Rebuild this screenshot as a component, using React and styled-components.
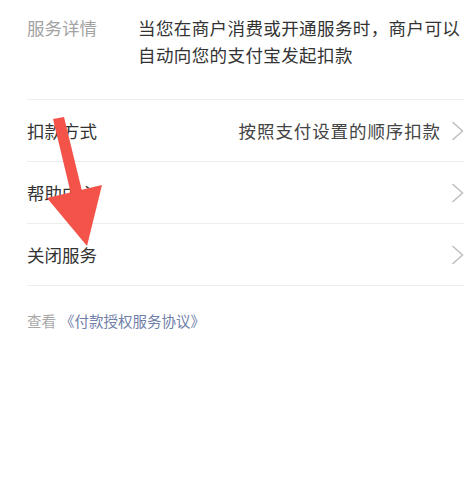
import React from "react";
import styled, { createGlobalStyle } from "styled-components";

const Global = createGlobalStyle`
  html, body { margin: 0; padding: 0; background: #fff; }
  body { font-family: "Noto Sans CJK SC", "Noto Sans", sans-serif; }
`;

const Page = styled.div`
  position: relative;
  width: 470px;
  height: 489px;
  background: #fff;
  padding-left: 27px;
  padding-right: 6px;
  box-sizing: border-box;
`;

const Detail = styled.div`
  display: flex;
  padding: 14px 0 31px;
  border-bottom: 1px solid #ededed;
`;

const DetailLabel = styled.div`
  width: 111px;
  flex-shrink: 0;
  font-size: 17.5px;
  line-height: 27px;
  color: #a3a3a3;
`;

const DetailText = styled.div`
  flex: 1;
  font-size: 17.5px;
  line-height: 27px;
  letter-spacing: 0.4px;
  color: #333;
`;

const Row = styled.div`
  display: flex;
  align-items: center;
  height: 61px;
  border-bottom: 1px solid #ededed;
`;

const RowLabel = styled.div`
  flex: 1;
  font-size: 17.5px;
  color: #333;
`;

const RowValue = styled.div`
  font-size: 17.5px;
  letter-spacing: 0.9px;
  color: #444;
  margin-right: 10px;
`;

const Chevron = styled.svg`
  width: 13px;
  height: 20px;
  flex-shrink: 0;
  margin-right: 0;
`;

const Agreement = styled.div`
  margin-top: 25px;
  font-size: 14.5px;
  line-height: 20px;
  color: #a8a8a8;
`;

const Link = styled.span`
  color: #7080a8;
  margin-left: 4px;
`;

const Arrow = styled.svg`
  position: absolute;
  left: 0;
  top: 0;
  width: 470px;
  height: 489px;
  pointer-events: none;
`;

const Arrowhead = () => (
  <Chevron viewBox="0 0 13 20">
    <polyline points="1.5,1 11.5,10 1.5,19" fill="none" stroke="#bcbcbc" strokeWidth="1.4" />
  </Chevron>
);

export default function App() {
  return (
    <>
      <Global />
      <Page>
        <Detail>
          <DetailLabel>服务详情</DetailLabel>
          <DetailText>当您在商户消费或开通服务时，商户可以自动向您的支付宝发起扣款</DetailText>
        </Detail>
        <Row>
          <RowLabel>扣款方式</RowLabel>
          <RowValue>按照支付设置的顺序扣款</RowValue>
          <Arrowhead />
        </Row>
        <Row>
          <RowLabel>帮助中心</RowLabel>
          <Arrowhead />
        </Row>
        <Row>
          <RowLabel>关闭服务</RowLabel>
          <Arrowhead />
        </Row>
        <Agreement>
          查看<Link>《付款授权服务协议》</Link>
        </Agreement>
        <Arrow viewBox="0 0 470 489">
          <polygon points="53,119 64,117 82,191 71,194" fill="#f4534a" />
          <polygon points="47,198 102,185 87,246" fill="#f4534a" />
        </Arrow>
      </Page>
    </>
  );
}
